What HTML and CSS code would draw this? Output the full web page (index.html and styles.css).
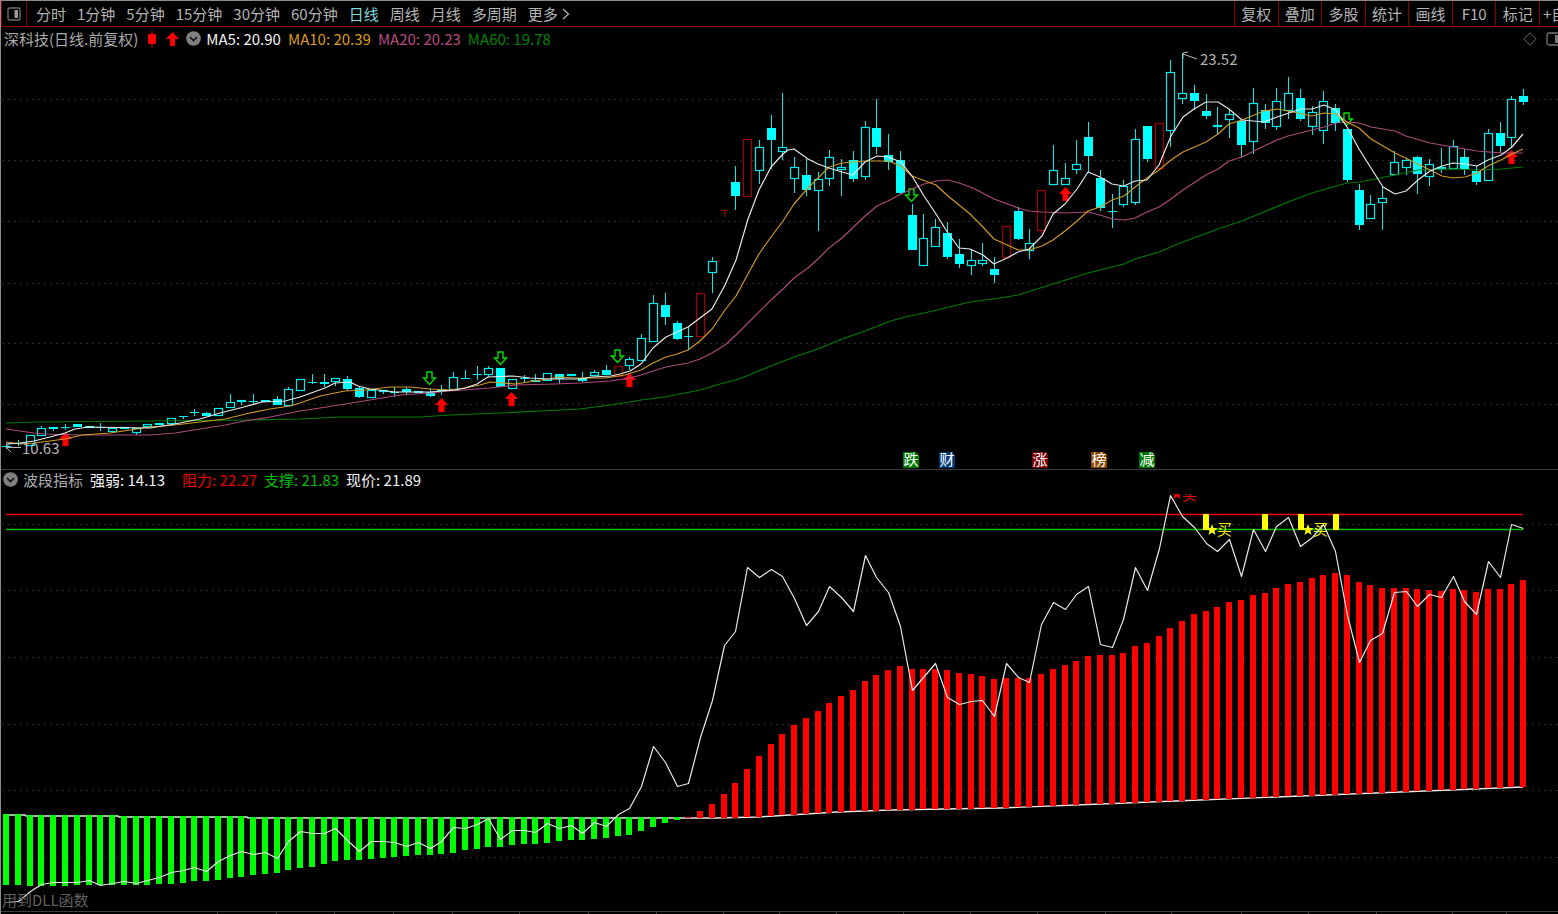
FILE: index.html
```html
<!DOCTYPE html>
<html lang="zh-CN">
<head>
<meta charset="utf-8">
<title>深科技 日线</title>
<link rel="stylesheet" href="styles.css">
</head>
<body>
<nav class="toolbar">
  <button class="dock" aria-label="侧栏">
    <svg width="14" height="14" viewBox="0 0 14 14"><rect x="1" y="1" width="12" height="12" rx="1.5" fill="none" stroke="#6e6e6e" stroke-width="1.4"/><rect x="7.5" y="3" width="3.5" height="8" fill="#9a9a9a"/></svg>
  </button>
  <div class="periods">
    <button>分时</button>
    <button>1分钟</button>
    <button>5分钟</button>
    <button>15分钟</button>
    <button>30分钟</button>
    <button>60分钟</button>
    <button class="active">日线</button>
    <button>周线</button>
    <button>月线</button>
    <button>多周期</button>
    <button class="more">更多<svg width="8" height="12" viewBox="0 0 8 12"><path d="M1 1L6.500 6L1 11" fill="none" stroke="#b8b8b8" stroke-width="1.2"/></svg></button>
  </div>
  <div class="tools">
    <button>复权</button>
    <button>叠加</button>
    <button>多股</button>
    <button>统计</button>
    <button>画线</button>
    <button>F10</button>
    <button>标记</button>
    <button class="cut">+自</button>
  </div>
</nav>

<main>
  <section class="panel">
    <header class="info info-main">
      <span class="stock">深科技(日线.前复权)</span>
      <svg class="mini" width="10" height="16" viewBox="0 0 10 16"><path d="M5 0V16" stroke="#b00000" stroke-width="1.5"/><rect x="1" y="3" width="8" height="10" rx="1" fill="#f00"/></svg>
      <svg class="up" width="13" height="14" viewBox="0 0 13 14"><path d="M6.500 0L13 7H9V14H4V7H0Z" fill="#f00"/></svg>
      <button class="fold" aria-label="展开主图"><svg width="15" height="15" viewBox="0 0 15 15"><circle cx="7.500" cy="7.500" r="7.300" fill="#808080"/><path d="M4 6L7.500 9.500L11 6" fill="none" stroke="#111" stroke-width="1.6"/></svg></button>
      <span class="ma5">MA5: 20.90</span>
      <span class="ma10">MA10: 20.39</span>
      <span class="ma20">MA20: 20.23</span>
      <span class="ma60">MA60: 19.78</span>
      <span class="corner">
        <svg width="14" height="14" viewBox="0 0 14 14"><path d="M7 .800L13.200 7L7 13.200L.800 7Z" fill="none" stroke="#666"/></svg>
        <svg width="12" height="14" viewBox="0 0 12 14"><rect x="1" y="1" width="16" height="12" rx="2" fill="none" stroke="#777" stroke-width="1.300"/><rect x="9" y="3" width="5" height="8" fill="#777"/></svg>
      </span>
    </header>
    <svg id="price" class="chart" viewBox="1 51 1557 418" role="img" aria-label="日线K线图"></svg>
  </section>

  <section class="panel panel-wave">
    <header class="info info-wave">
      <button class="fold" aria-label="展开指标"><svg width="15" height="15" viewBox="0 0 15 15"><circle cx="7.500" cy="7.500" r="7.300" fill="#808080"/><path d="M4 6L7.500 9.500L11 6" fill="none" stroke="#111" stroke-width="1.6"/></svg></button>
      <span class="stock">波段指标</span>
      <span class="ma5 strength">强弱: 14.13</span>
      <span class="resist">阻力: 22.27</span>
      <span class="support">支撑: 21.83</span>
      <span class="ma5">现价: 21.89</span>
    </header>
    <svg id="wave" class="chart" viewBox="1 491 1557 423" role="img" aria-label="波段指标图"></svg>
  </section>
</main>
<script src="chart.js"></script>
</body>
</html>
```
FILE: styles.css
```css
* { box-sizing: border-box; }
body {
  margin: 0;
  background: #000;
  border-top: 1px solid #8c8c8c;
  border-left: 1px solid #8c8c8c;
  color: #b4b4b4;
  font: 15px/20px "Noto Sans CJK SC", sans-serif;
  overflow: hidden;
}
button {
  background: none;
  border: 0;
  padding: 0;
  color: inherit;
  font: inherit;
  white-space: nowrap;
}
svg { display: block; flex: none; }

.toolbar {
  display: flex;
  height: 26px;
  border-bottom: 1px solid #8a0000;
}
.dock {
  width: 26px;
  border-left: 1px solid #8a0000;
  border-right: 1px solid #8a0000;
  display: flex;
  align-items: center;
  justify-content: center;
}
.periods {
  display: flex;
  gap: 11px;
  padding-left: 9px;
  align-items: center;
}
.active { color: #7fd6dc; }
.more { display: flex; align-items: center; gap: 4px; }
.tools {
  margin-left: auto;
  width: 324px;
  display: grid;
  grid-template-columns: repeat(7, 1fr) 19px;
}
.tools button { border-left: 1px solid #8a0000; }
.tools .cut { overflow: hidden; text-align: left; padding-left: 3px; }

.info { display: flex; align-items: center; padding-left: 3px; gap: 7px; white-space: nowrap; }
.info-main { height: 24px; padding-bottom: 1px; }
.info-wave { height: 21px; gap: 7px; padding-left: 2px; padding-bottom: 2px; }
.mini { margin-left: 2px; }
.up { margin-left: 2px; }
.info .fold { margin-right: -2px; }
.strength { margin-right: 10px; }
.corner { margin-left: auto; display: flex; gap: 9px; }
.stock { color: #acacac; }
.ma5 { color: #f0f0f0; }
.ma10 { color: #dc9c20; }
.ma20 { color: #b84c80; }
.ma60 { color: #008400; }
.resist { color: #e80000; }
.support { color: #00be00; }

.panel-wave { border-top: 1px solid #3c3c3c; }
.chart { width: 100%; height: auto; overflow: visible; }

.grid { stroke: #2c2c2c; stroke-dasharray: 2 4; }
.candle-up { fill: #000; stroke: #00ecec; stroke-width: 1.2; }
.candle-down { fill: #00ffff; }
.candle-limit { fill: #000; stroke: #a00000; stroke-width: 1.2; }
.wick { fill: #00ecec; }
.wick-limit { fill: #a00000; }
.line { fill: none; stroke-width: 1.2; stroke-linejoin: round; }
.line-ma5 { stroke: #e8e8e8; }
.line-ma10 { stroke: #d09822; }
.line-ma20 { stroke: #aa4a7c; }
.line-ma60 { stroke: #007c00; }
.line-base { stroke: #e8e8e8; stroke-width: 1.4; }
.line-resist { stroke: #f00000; stroke-width: 1.4; }
.line-support { stroke: #00c000; stroke-width: 1.4; }
.signal-sell { fill: #000; stroke: #00e000; stroke-width: 1.4; }
.signal-buy { fill: #f00; }
.bar-green { fill: #00ff00; }
.bar-red { fill: #ff0000; }
.mark { fill: #ffff00; }
.price-note { fill: #b4b4b4; font-size: 15px; }
.pointer { fill: none; stroke: #b8b8b8; }
.event { fill: #fff; font-size: 15px; text-anchor: middle; }
.buy { fill: #f0f000; font-size: 15px; }
.buy-hot { fill: #f00000; font-size: 15px; }
.star-hot { fill: #f00000; }
.dll { fill: #606060; font-size: 15px; }
.axis { stroke: #3c3c3c; fill: none; }
```
FILE: chart.js
```js
const STEP = 11.76;
const X0 = 6;
const xAt = i => Math.round(X0 + STEP * i + 0.2);

// h: hollow, f: filled, r: limit-up, d: doji; then high, body top, body bottom, low
const candles = `d 444 446 446 448|d 440 443 443 445|h 435 435 446 446|h 426 428 436 436|f 427 427 429 431|d 424 427 427 429|f 424 424 427 427|f 426 426 428 428|d 423 427 427 430|h 428 428 432 432
h 427 427 429 429|h 428 428 433 435|h 424 424 427 427|f 423 423 425 425|h 418 418 424 424|d 416 416 416 418|d 409 412 412 415|f 412 413 416 416|h 408 408 416 416|h 394 402 408 408
h 400 400 402 405|d 394 401 401 404|f 400 400 402 402|f 396 399 405 405|h 387 389 406 406|h 379 379 391 391|d 374 382 382 383|f 374 382 384 387|h 378 378 382 386|f 376 379 389 391
f 386 388 397 398|h 390 390 398 398|h 390 390 392 394|d 387 392 392 396|f 387 389 392 395|f 391 391 393 393|f 388 392 396 397|f 385 389 392 395|h 372 377 390 390|d 370 378 378 378
d 366 374 374 379|h 366 368 375 377|f 368 368 387 387|h 379 379 389 389|d 375 378 378 382|f 374 380 382 382|h 373 373 381 381|f 374 374 379 384|h 374 374 376 376|f 372 378 381 382
h 370 372 376 376|f 365 370 375 375|r 366 366 377 377|h 357 359 366 370|h 334 338 361 361|h 295 303 342 342|f 293 305 317 325|f 321 323 339 340|d 327 336 336 349|r 293 293 337 337
h 257 261 273 293|t 210 210 210 216|f 166 182 196 210|r 139 139 197 197|h 140 147 171 184|f 115 128 140 169|h 93 147 152 160|h 157 167 179 193|f 159 175 190 196|h 172 179 191 231
h 150 157 179 186|h 159 167 170 196|f 151 160 179 182|h 121 127 177 180|f 99 128 147 154|f 134 155 162 170|f 151 160 193 194|f 204 215 250 250|h 214 238 266 266|h 219 227 247 247
f 222 233 257 259|f 239 254 264 268|h 249 260 266 275|h 243 260 264 266|f 257 269 275 283|r 226 226 258 258|f 207 211 239 240|h 229 243 251 259|r 190 190 231 234|h 145 170 185 185
h 163 178 185 185|h 140 164 170 174|f 122 137 156 173|f 170 178 208 211|d 194 211 211 227|h 180 186 205 207|h 129 139 203 205|f 126 126 159 162|r 123 123 169 170|h 60 72 131 147
h 53 93 99 104|f 85 93 101 110|f 94 111 116 119|h 107 125 127 135|h 110 114 120 138|f 121 121 145 157|h 88 103 142 154|f 104 110 123 129|h 88 101 127 130|h 77 93 111 119
f 89 98 119 121|h 106 112 127 135|h 91 101 131 144|f 104 108 123 131|f 129 129 180 182|f 184 190 225 230|h 195 204 219 219|h 187 198 203 230|h 151 162 175 175|h 158 160 168 175
f 156 157 174 194|h 159 164 177 186|h 148 167 169 173|h 140 146 169 169|f 149 157 169 175|f 166 171 182 185|h 129 133 181 181|f 122 133 146 153|h 96 99 138 147|f 89 96 102 105`
  .split(/[|\n]/).map(s => s.trim().split(' '));

const averages = {
  ma60: '6,423 40,422 150,421 250,420 300,419 320,418 340,417 420,417 450,415 500,413 540,411 580,409 610,405 630,402 641,400 665,397 700,390 720,384 739,379 771,366 794,357 818,349 842,339 865,331 888,322 901,318 933,311 970,302 1000,298 1018,295 1037,289 1088,273 1124,264 1135,259 1159,252 1183,242 1199,236 1218,229 1242,221 1264,212 1288,202 1312,193 1347,183 1360,182 1395,175 1418,170 1453,169 1477,170 1501,169 1523,167',
  ma20: '6,429 20,431 34,433 45,434 80,435 150,435 175,433 200,429 225,425 245,421 270,417 300,411 320,408 345,404 370,400 400,395 430,393 450,391 490,388 515,385 555,384 580,383 610,381 630,378 641,375 653,371 666,367 688,363 700,359 712,353 725,345 736,335 748,323 771,300 783,289 794,278 808,268 818,259 829,248 842,238 865,216 877,206 888,201 901,194 912,189 924,184 936,181 948,180 959,183 973,188 994,199 1018,208 1029,211 1042,212 1065,213 1088,212 1100,215 1112,219 1124,220 1135,218 1147,212 1159,207 1171,199 1183,190 1206,175 1218,169 1229,161 1242,157 1264,146 1277,140 1288,136 1312,130 1324,127 1336,123 1347,122 1359,123 1371,127 1395,131 1406,136 1430,143 1465,149 1477,151 1501,153 1523,153',
  ma10: '6,442 20,444 34,443 50,441 65,439 82,435 110,433 150,427 175,425 200,422 225,419 250,413 270,409 290,406 300,403 320,396 330,394 345,391 365,390 390,387 410,387 430,389 450,390 465,388 480,385 490,382 515,384 535,381 560,377 575,378 605,378 625,375 641,370 653,363 666,357 677,354 688,350 700,341 712,329 725,310 736,296 748,274 759,254 771,237 783,221 794,204 808,188 818,178 829,167 842,163 853,162 865,161 888,161 901,166 912,176 936,185 948,196 970,214 983,227 994,239 1018,250 1029,250 1042,246 1053,240 1065,231 1077,221 1088,211 1100,207 1112,200 1124,196 1135,187 1147,178 1159,170 1171,160 1183,152 1206,142 1218,134 1229,124 1242,120 1264,111 1277,109 1288,111 1312,116 1324,113 1336,114 1347,122 1359,128 1371,139 1395,153 1418,164 1430,170 1442,176 1453,178 1465,177 1477,173 1488,166 1501,160 1512,154 1523,149',
  ma5: '6,444 20,443 34,441 50,437 65,433 75,429 88,427 150,428 175,424 200,419 220,413 240,408 262,402 285,401 300,397 325,388 335,383 350,382 358,386 370,389 395,392 430,392 441,391 455,390 465,388 477,384 488,377 513,376 530,378 548,379 580,379 592,377 611,376 620,374 630,371 641,364 653,348 666,337 677,332 688,327 700,318 712,309 725,285 736,260 748,219 759,190 771,167 783,154 788,150 794,149 808,159 818,164 829,168 842,172 853,175 865,162 877,156 888,157 901,162 912,176 924,196 936,214 948,233 959,248 970,249 983,255 994,264 1007,258 1018,252 1029,249 1042,236 1053,214 1065,204 1077,189 1088,172 1100,177 1112,184 1124,186 1135,181 1147,180 1159,165 1171,136 1183,117 1194,109 1206,102 1218,102 1229,109 1242,120 1264,122 1277,117 1301,109 1312,109 1324,105 1336,110 1347,127 1359,149 1371,168 1383,187 1395,194 1406,191 1418,180 1430,171 1442,166 1453,163 1465,164 1477,166 1488,160 1501,155 1512,147 1523,134'
};

const sells = [[429, 378], [500, 358], [617, 356], [911, 195], [1346, 119]];
const buys = [[65, 439], [441, 405], [511, 399], [629, 380], [1065, 194], [1511, 157]];
const events = [[911, '跌', '#007800'], [947, '财', '#003a78'], [1040, '涨', '#780000'], [1099, '榜', '#8a4400'], [1147, '减', '#007800']];

const gridLines = ys => ys.map(y => `<path class="grid" d="M2 ${y}.5H1558"/>`).join('');
const rect = (cls, x, y, w, h) => `<rect class="${cls}" x="${x}" y="${y}" width="${w}" height="${h}"/>`;
const poly = (cls, pts) => `<polyline class="line line-${cls}" points="${pts}"/>`;

function drawCandle([type, ...values], i) {
  const [high, top, bottom, low] = values.map(Number);
  const x = xAt(i);
  const wick = type === 'r' || type === 't' ? 'wick-limit' : 'wick';
  let out = '';
  if (type === 'd' || type === 't') {
    const half = type === 'd' ? 4 : 3;
    return rect(wick, x, high, 1, low - high + 1) + rect(wick, x - half, top, half * 2 + 1, 1);
  }
  if (top > high) out += rect(wick, x, high, 1, top - high);
  if (low > bottom) out += rect(wick, x, bottom, 1, low - bottom);
  if (type === 'f') return out + rect('candle-down', x - 4, top, 9, bottom - top);
  const cls = type === 'h' ? 'candle-up' : 'candle-limit';
  return out + rect(cls, x - 3.5, top + 0.5, 8, Math.max(bottom - top - 1, 1));
}

const arrowDown = ([x, y]) => `<path class="signal-sell" d="M${x - 2} ${y - 6}h5v6h3.500l-6 6.500l-6 -6.500h3.500z"/>`;
const arrowUp = ([x, y]) => `<path class="signal-buy" d="M${x + 0.5} ${y - 7}l6.500 7h-3.500v7h-6v-7h-3.500z"/>`;

document.getElementById('price').innerHTML =
  gridLines([99, 160, 221, 283, 343, 404]) +
  candles.map(drawCandle).join('') +
  sells.map(arrowDown).join('') + buys.map(arrowUp).join('') +
  ['ma60', 'ma20', 'ma10', 'ma5'].map(k => poly(k, averages[k])).join('') +
  '<path class="pointer" d="M1197 59L1183 54M1183 59V53L1188 52"/>' +
  '<text class="price-note" x="1200" y="65">23.52</text>' +
  '<path class="pointer" d="M21 447.500H6M11 442L6 447.500L11 452"/>' +
  '<text class="price-note" x="22" y="454">10.63</text>' +
  events.map(([x, t, c]) => `<path fill="${c}" d="M${x - 8} 452h13l3 3v13h-16z"/><text class="event" x="${x}" y="465">${t}</text>`).join('');

const barEnds = [885, 885, 886, 886, 886, 886, 885, 885, 885, 885, 885, 885, 885, 884, 884, 883, 881, 881, 880, 878, 877, 875, 874, 873, 870, 868, 867, 864, 861, 860, 860, 859, 858, 857, 856, 855, 855, 854, 853, 850, 849, 847, 847, 845, 844, 844, 843, 841, 840, 840, 839, 838, 836, 835, 831, 827, 823, 820,
  817, 811, 804, 794, 783, 769, 756, 744, 734, 725, 718, 711, 703, 696, 690, 681, 675, 670, 666, 669, 669, 669, 670, 673, 674, 676, 679, 678, 678, 678, 674, 669, 665, 661, 656, 655, 655, 653, 646, 643, 636, 628, 621, 614, 611, 607, 602, 600, 595, 593, 588, 584, 582, 578, 575, 573, 575, 582, 585, 588, 588, 588, 589, 590, 591, 589, 590, 592, 589, 589, 584, 580];
const strength = [902, 901, 891, 884, 882, 882, 882, 880, 885, 883, 881, 883, 880, 877, 872, 870, 867, 871, 861, 855, 851, 854, 852, 858, 841, 831, 833, 833, 828, 840, 851, 841, 841, 842, 846, 842, 848, 841, 827, 828, 824, 818, 839, 830, 830, 832, 823, 828, 825, 833, 822, 826, 814, 808, 786, 746, 762, 786, 783, 737, 700, 645, 631, 567, 577, 569, 576, 598, 625, 611, 586, 597, 611, 555, 577, 592, 626, 690, 677, 663, 697, 704, 701, 700, 716, 663, 677, 682, 624, 602, 609, 594, 586, 644, 647, 619, 567, 590, 548, 495, 516, 527, 543, 551, 539, 576, 529, 551, 526, 517, 546, 537, 524, 551, 615, 662, 640, 633, 592, 591, 606, 594, 597, 576, 601, 614, 561, 577, 524, 528];
const base = [[0, 815], [25, 815], [26, 816], [118, 816], [119, 817], [247, 817], [248, 818], [715, 818], [757, 817], [837, 812], [890, 810], [1000, 808], [1100, 804], [1200, 800], [1300, 796], [1400, 792], [1523, 787]];

function baseAt(x) {
  const k = Math.max(1, base.findIndex(p => p[0] >= x));
  const [x1, y1] = base[k - 1];
  const [x2, y2] = base[k];
  return Math.round(y1 + (y2 - y1) * (x - x1) / (x2 - x1));
}

function drawBar(end, i) {
  const x = xAt(i) - 3;
  const b = baseAt(xAt(i));
  return end > b ? rect('bar-green', x, b - 1, 6, end - b + 1) : rect('bar-red', x, end, 6, b - end);
}

const star = (cls, x, y) => {
  const pts = [];
  for (let k = 0; k < 10; k++) {
    const r = k % 2 ? 2.5 : 6;
    const a = Math.PI * k / 5 - Math.PI / 2;
    pts.push((x + r * Math.cos(a)).toFixed(1) + ',' + (y + r * Math.sin(a)).toFixed(1));
  }
  return `<polygon class="${cls}" points="${pts.join(' ')}"/>`;
};

const ticks = [217, 276, 334, 393, 452, 519, 588, 656, 723, 779, 836, 903, 970, 1037, 1105, 1171, 1241, 1308, 1376, 1452, 1506];

document.getElementById('wave').innerHTML =
  gridLines([524, 590, 657, 724, 790, 857]) +
  poly('base', base.map(p => p.join(',')).join(' ').replace('0,815', '6,815')) +
  barEnds.map(drawBar).join('') +
  '<path class="line-resist" d="M6 514.500H1523"/><path class="line-support" d="M6 529.500H1523"/>' +
  [1203, 1262, 1298, 1333].map(x => rect('mark', x, 514, 6, 16)).join('') +
  [1211, 1307].map(x => star('mark', x + 1, 530) + `<text class="buy" x="${x + 6}" y="535">买</text>`).join('') +
  '<clipPath id="top"><rect x="1160" y="494" width="60" height="20"/></clipPath>' +
  '<g clip-path="url(#top)">' + star('star-hot', 1177, 494) + '<text class="buy-hot" x="1182" y="500">买</text></g>' +
  poly('ma5', strength.map((y, i) => `${xAt(i)}.5,${y}.5`).join(' ')) +
  '<text class="dll" x="2" y="906">用到DLL函数</text>' +
  '<path class="axis" d="M1 911.500H1558"/>' +
  ticks.map(x => `<path class="axis" d="M${x}.5 911V914"/>`).join('');
```
